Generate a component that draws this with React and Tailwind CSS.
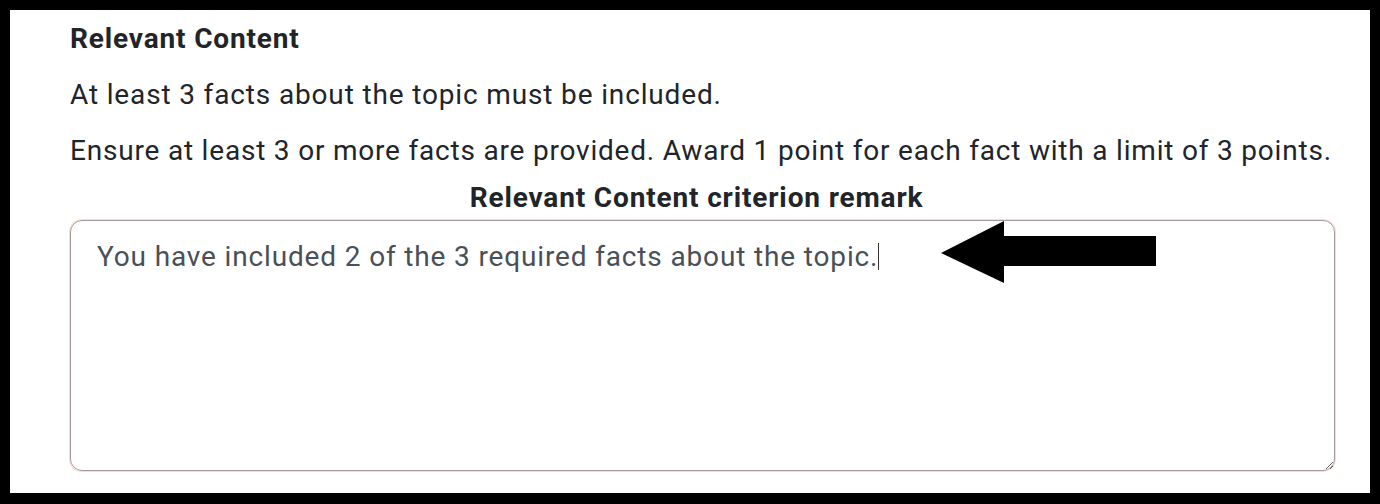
const remark = "You have included 2 of the 3 required facts about the topic.";

export default function App() {
  return (
    <div className="w-[1380px] h-[504px] bg-black pt-[10px] pl-[10px] pr-[10px] pb-[11px]">
      <div className="h-full bg-white pl-[60px] pr-[35px] pt-[11px] font-['Roboto',sans-serif] text-[#212529] text-[28px] leading-[36px] tracking-[0.85px]">
        <h3 className="font-bold">Relevant Content</h3>
        <p className="mt-[20px]">At least 3 facts about the topic must be included.</p>
        <p className="mt-[20px] whitespace-nowrap tracking-[0.8px]">
          Ensure at least 3 or more facts are provided. Award 1 point for each fact with a limit of 3 points.
        </p>
        <label htmlFor="remark" className="block mt-[11px] pr-[12px] text-center font-bold">
          Relevant Content criterion remark
        </label>
        <div className="relative mt-[4px]">
          <textarea
            id="remark"
            defaultValue={remark}
            className="block w-full h-[251px] rounded-[12px] border border-[#a39b9b] shadow-[0_0_0_1px_#fcdccb] outline-none pt-[18px] px-[26px] text-[#495057]"
          />
          {/* caret overlay: invisible copy of the text followed by the cursor */}
          <div className="absolute inset-0 border border-transparent pt-[18px] px-[26px] pointer-events-none">
            <span className="text-transparent">{remark}</span>
            <span className="inline-block w-0 h-[27px] align-[-4px] border-l border-[#333]" />
          </div>
          <svg
            className="absolute left-[871px] top-[1px] pointer-events-none"
            width="215"
            height="62"
            viewBox="0 0 215 62"
          >
            <polygon points="0,32 63,0 63,15 215,15 215,45 63,45 63,62" fill="#000" />
          </svg>
        </div>
      </div>
    </div>
  );
}
